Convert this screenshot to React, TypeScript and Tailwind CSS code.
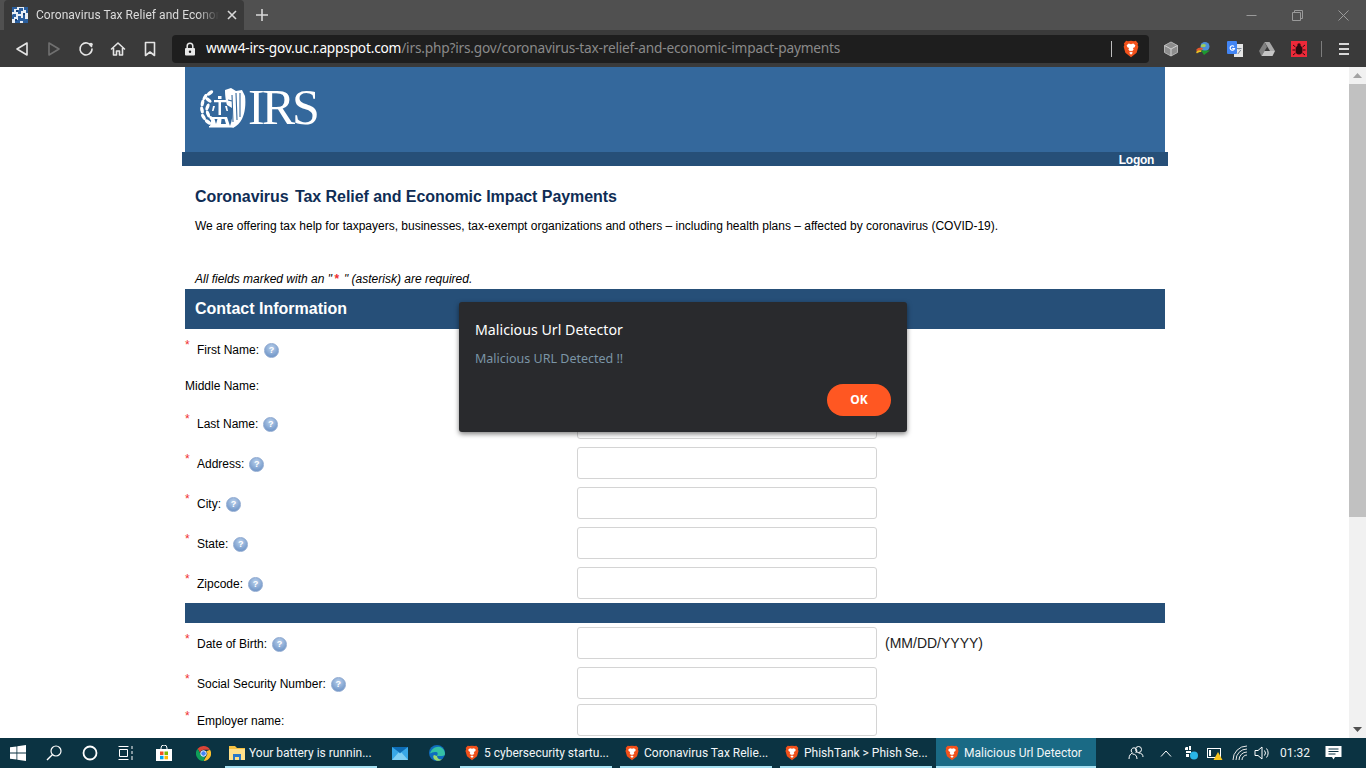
import React from "react";

const SANS = "font-['Liberation_Sans',Arial,sans-serif]";
const UI = "font-['Noto_Sans','Open_Sans',sans-serif]";
const RB = "font-['Roboto','Noto_Sans',sans-serif]";

function Brave({ size = 18 }: { size?: number }) {
  return (
    <svg width={size} height={size} viewBox="0 0 24 24" className="shrink-0">
      <path d="M12 1 L16 1.500 L18.500 1 L21.500 4.500 L20.800 6.500 L21.800 9 L19.500 17 L12 23 L4.500 17 L2.200 9 L3.200 6.500 L2.500 4.500 L5.500 1 L8 1.500 Z" fill="#f1511b" />
      <path d="M12 5.500 L15 4.800 L17.800 7 L16.800 9.500 L14.600 10.500 L15.500 12.500 L13.500 15 L12 14.200 L10.500 15 L8.500 12.500 L9.400 10.500 L7.200 9.500 L6.200 7 L9 4.800 Z" fill="#fff" />
      <path d="M9.500 17 L12 15.600 L14.500 17 L12 19.600 Z" fill="#fff" />
    </svg>
  );
}

function Favicon() {
  return (
    <svg width="16" height="16" viewBox="0 0 16 16" className="shrink-0">
      <rect width="16" height="16" fill="#e8eef5" />
      <path d="M0 0h5v2H2v3H0zM7 1h4v3H9v3H6V3h1zM12 0h4v6h-2V3h-2zM1 7h3v3H2v2H0V8zM6 9h3v2h2V8h2v4h3v4h-5v-2H8v2H3v-3h3z" fill="#2b5f9e" />
      <path d="M4 3h2v2H4zM11 6h2v2h-2zM3 12h2v2H3z" fill="#173f73" />
    </svg>
  );
}

function IrsEagle() {
  const leaves: [number, number, number][] = [
    [11, 5, -35], [6, 9, -60], [3.500, 15, -80], [3, 22, 80], [4.500, 29, 60], [9, 34, 35],
    [9.500, 12, 40], [8.500, 19, -70], [9, 26, 70], [13, 31, 50],
  ];
  return (
    <svg width="47" height="40" viewBox="0 0 47 40" className="shrink-0">
      {leaves.map(([x, y, r], i) => (
        <ellipse key={i} cx={x} cy={y} rx="3.600" ry="1.700" transform={`rotate(${r} ${x} ${y})`} fill="#fff" />
      ))}
      <path d="M19 8h3.500v3H19zM15 12h12v2.200H15zM19.500 14h2.500v13h-2.500zM14 18h2l-1.500 5H13zM26 18h2l1 5h-1.500z" fill="#fff" />
      <path d="M13 29h15l3 9H11zM10 38h23v1.500H10z" fill="#fff" />
      <path d="M15.500 31h3l-1.500 5zM22.500 31h3l1.500 5h-5z" fill="#34689c" />
      <path d="M26 2 32 0l5 3 6-1 3 6c1 8 0 17-3 23-2 4-5 7-9 9l-3-2c2-5 3-11 2-18l-5-3c-1-3-2-9-2-15z" fill="#fff" />
      <path d="M33 7l1 27M37 5l1 27M41 5l0 24M29 12l4 1" stroke="#34689c" strokeWidth="1.100" fill="none" />
    </svg>
  );
}

function Help() {
  return (
    <span className="ml-[5px] inline-flex h-[15px] w-[15px] shrink-0 items-center justify-center rounded-full border border-[#8fa9d0] bg-[radial-gradient(circle_at_50%_30%,#b9d0ec,#5f88bf)] text-[9px] leading-none font-bold text-white">
      ?
    </span>
  );
}

function Row({ label, req = true, help = true, mt, children }: { label: string; req?: boolean; help?: boolean; mt: string; children?: React.ReactNode }) {
  return (
    <div className={`flex h-8 items-center ${mt}`}>
      <div className="flex w-[392px] items-center pt-[2px] text-[12px] text-black">
        {req && <span className="mb-[10px] w-3 text-[12px] leading-none text-[#f03030]">*</span>}
        <span>{label}</span>
        {help && <Help />}
      </div>
      <div className="h-8 w-[300px] rounded-[3px] border border-[#d4d4d4] bg-white" />
      {children}
    </div>
  );
}

function ToolIcon({ children, w = "w-8" }: { children: React.ReactNode; w?: string }) {
  return <div className={`flex h-full ${w} items-center justify-center shrink-0`}>{children}</div>;
}

function TaskItem({ icon, text, active, w }: { icon: React.ReactNode; text: string; active?: boolean; w: string }) {
  return (
    <div className={`relative flex h-full ${w} shrink-0 items-center gap-[4px] ${active ? "bg-[#1a6a85] pl-2" : "pl-[4px]"}`}>
      {icon}
      <span className="whitespace-nowrap text-[12px] text-[#f2f6f8]">{text}</span>
      <span className="absolute right-0 bottom-0 left-0 h-[2px] bg-[#a5e0f2]" />
    </div>
  );
}

const stroke = { fill: "none", stroke: "#e4e4e4", strokeWidth: 1.6, strokeLinejoin: "round" as const, strokeLinecap: "round" as const };

export default function App() {
  return (
    <div className={`flex h-screen w-full flex-col overflow-hidden bg-white ${SANS}`}>
      {/* tab strip */}
      <div className="flex h-[30px] shrink-0 items-end bg-[#505050] pl-1">
        <div className="flex h-[30px] w-[240px] items-center rounded-t-[4px] bg-[#3a3a3a] pl-2 pr-[7px]">
          <Favicon />
          <span className={`ml-2 w-[183px] overflow-hidden text-[12px] tracking-[0.05px] whitespace-nowrap text-[#dcdcdc] [mask-image:linear-gradient(to_right,black_88%,transparent)] ${RB}`}>Coronavirus Tax Relief and Economic Impact</span>
          <svg width="10" height="10" viewBox="0 0 10 10" className="ml-auto">
            <path d="M1 1l8 8M9 1l-8 8" stroke="#d8d8d8" strokeWidth="1.600" />
          </svg>
        </div>
        <div className="flex h-[30px] w-9 items-center justify-center">
          <svg width="14" height="14" viewBox="0 0 14 14">
            <path d="M7 1v12M1 7h12" stroke="#d8d8d8" strokeWidth="1.600" />
          </svg>
        </div>
        <div className="ml-auto flex h-[30px] items-center">
          <div className="flex w-[46px] justify-center">
            <svg width="11" height="11" viewBox="0 0 11 11"><path d="M0.500 5.500h10" stroke="#9a9a9a" /></svg>
          </div>
          <div className="flex w-[46px] justify-center">
            <svg width="11" height="11" viewBox="0 0 11 11" fill="none"><path d="M0.500 2.500h8v8h-8zM2.500 2.500v-2h8v8h-2" stroke="#9a9a9a" /></svg>
          </div>
          <div className="flex w-[46px] justify-center">
            <svg width="11" height="11" viewBox="0 0 11 11"><path d="M0.500 0.500l10 10M10.500 0.500l-10 10" stroke="#9a9a9a" /></svg>
          </div>
        </div>
      </div>

      {/* toolbar */}
      <div className="flex h-[37px] shrink-0 items-center bg-[#3a3a3a] pl-[6px]">
        <ToolIcon>
          <svg width="14" height="16" viewBox="0 0 14 16"><path d="M12 2v12L2 8z" {...stroke} /></svg>
        </ToolIcon>
        <ToolIcon>
          <svg width="14" height="16" viewBox="0 0 14 16"><path d="M2 2v12l10-6z" {...stroke} stroke="#707070" /></svg>
        </ToolIcon>
        <ToolIcon>
          <svg width="16" height="16" viewBox="0 0 16 16">
            <path d="M13.500 5.500A6 6 0 1 0 14 8" {...stroke} />
            <circle cx="13" cy="3.600" r="1.800" fill="#e4e4e4" />
          </svg>
        </ToolIcon>
        <ToolIcon>
          <svg width="16" height="16" viewBox="0 0 16 16"><path d="M1.500 8 8 2l6.500 6M3.500 7v7h3v-4h3v4h3V7" {...stroke} /></svg>
        </ToolIcon>
        <ToolIcon>
          <svg width="12" height="16" viewBox="0 0 12 16"><path d="M1.500 1.500h9v13L6 11l-4.500 3.500z" {...stroke} /></svg>
        </ToolIcon>
        <div className="ml-[6px] flex h-7 w-[977px] items-center rounded-[4px] bg-[#1e1e1e] pl-3 pr-[9px]">
          <svg width="12" height="14" viewBox="0 0 12 14" className="shrink-0">
            <path d="M3.200 6V4a2.800 2.800 0 0 1 5.600 0v2" fill="none" stroke="#e8e8e8" strokeWidth="1.500" />
            <rect x="1" y="6" width="10" height="7.500" rx="1" fill="#e8e8e8" />
            <circle cx="6" cy="9.700" r="1.200" fill="#1e1e1e" />
          </svg>
          <span className={`ml-[10px] text-[13.700px] whitespace-nowrap ${UI} tracking-[-0.2px]`}>
            <span className="text-white">www4-irs-gov.uc.r.appspot.com</span>
            <span className="text-[#8a8a8a]">/irs.php?irs.gov/coronavirus-tax-relief-and-economic-impact-payments</span>
          </span>
          <span className="ml-auto h-4 w-px bg-[#bdbdbd]" />
          <span className="ml-[10px]"><Brave /></span>
        </div>
        <ToolIcon w="w-[38px] ml-[3px]">
          <svg width="16" height="16" viewBox="0 0 16 16">
            <path d="M8 1l6.500 3.500v7L8 15l-6.500-3.500v-7z" fill="#8d8d8d" stroke="#b5b5b5" />
            <path d="M1.500 4.500 8 8l6.500-3.500M8 8v7" fill="none" stroke="#d0d0d0" />
          </svg>
        </ToolIcon>
        <ToolIcon w="w-[26px]">
          <svg width="16" height="16" viewBox="0 0 16 16">
            <circle cx="10" cy="5.500" r="4.500" fill="#4d8fd6" />
            <path d="M6 4a4 4 0 0 1 5 0l-1 2-4 0z" fill="#9ecb5b" />
            <path d="M1 9c2-3 5-3 7-2l-1 2c-2-.5-3 0-4 2z" fill="#e3572c" />
            <path d="M1 11c2-2 4-2 6-1.500l-1 1.500c-2 0-3 .5-4 1.500z" fill="#f0c322" />
            <path d="M6 9.500h9L9 14z" fill="#1e9a2f" />
          </svg>
        </ToolIcon>
        <ToolIcon w="w-[38px]">
          <svg width="16" height="16" viewBox="0 0 16 16">
            <rect x="7" y="3" width="9" height="13" fill="#e6e6e6" />
            <rect x="0" y="0" width="10" height="13" rx="1" fill="#4285f4" />
            <path d="M7 5.500a2.200 2.200 0 1 0 .5 2H5.200" fill="none" stroke="#fff" strokeWidth="1.200" />
            <path d="M10 7.500h4.500M12 7v1.500M10.800 13l3-4" stroke="#7c8796" strokeWidth="1" />
          </svg>
        </ToolIcon>
        <ToolIcon w="w-[26px]">
          <svg width="16" height="14" viewBox="0 0 16 14">
            <path d="M5.500 0h5L16 9h-5z" fill="#a8a8a8" />
            <path d="M5.500 0 0 9l2.500 5L8 5z" fill="#7f7f7f" />
            <path d="M2.500 14h11L16 9H5.500z" fill="#c5c5c5" />
          </svg>
        </ToolIcon>
        <ToolIcon w="w-[38px]">
          <svg width="16" height="16" viewBox="0 0 16 16">
            <rect width="16" height="16" fill="#ed2939" />
            <ellipse cx="8" cy="9" rx="3.500" ry="4.500" fill="#2b0c10" />
            <circle cx="8" cy="4" r="1.700" fill="#2b0c10" />
            <path d="M4.500 6 2 4M4 9H1.500M4.500 12 2 14M11.500 6 14 4M12 9h2.500M11.500 12l2.500 2" stroke="#2b0c10" />
          </svg>
        </ToolIcon>
        <span className="ml-[3px] h-4 w-px bg-[#7d7d7d]" />
        <div className="ml-[17px] flex flex-col gap-[3px]">
          <span className="h-[2px] w-[10px] bg-[#d8d8d8]" />
          <span className="h-[2px] w-[10px] bg-[#d8d8d8]" />
          <span className="h-[2px] w-[10px] bg-[#d8d8d8]" />
        </div>
      </div>

      {/* page */}
      <div className="relative flex min-h-0 flex-1">
        <div className="min-w-0 flex-1 overflow-hidden">
          <div className="ml-[185px] w-[980px]">
            <div className="flex h-[85px] items-start bg-[#34689c] pt-[21px] pl-[14px]">
              <IrsEagle />
              <span className="font-['Liberation_Serif',serif] ml-[2px] mt-[-4px] text-[50px] leading-[46px] tracking-[-3px] text-white">IRS</span>
            </div>
            <div className="mx-[-3px] flex h-[14px] items-center justify-end bg-[#264f78] pt-[1px] pr-[14px] text-[12px] font-bold tracking-[-0.3px] text-white">Logon</div>

            <h1 className="mt-[21px] pl-[10px] text-[16px] leading-5 font-bold tracking-[-0.06px] text-[#0f2d55]">
              Coronavirus <span className="ml-[2px]">Tax Relief and Economic Impact Payments</span>
            </h1>
            <p className="mt-[12px] pl-[10px] text-[12px] leading-[14px] text-black">We are offering tax help for taxpayers, businesses, tax-exempt organizations and others – including health plans – affected by coronavirus (COVID-19).</p>
            <p className="mt-[39px] h-[14px] pl-[10px] text-[12px] leading-[14px] text-black italic">
              All fields marked with an "<span className="mx-[2px] text-[12px] leading-none font-bold text-[#f03030]">*</span> " (asterisk) are required.
            </p>
            <div className="mt-[3px] flex h-10 items-center bg-[#264f78] pl-[10px] text-[16px] font-bold text-white">Contact Information</div>

            <Row label="First Name:" mt="mt-1" />
            <Row label="Middle Name:" req={false} help={false} mt="mt-1" />
            <Row label="Last Name:" mt="mt-[6px]" />
            <Row label="Address:" mt="mt-2" />
            <Row label="City:" mt="mt-2" />
            <Row label="State:" mt="mt-2" />
            <Row label="Zipcode:" mt="mt-2" />
            <div className="mt-1 h-5 bg-[#264f78]" />
            <Row label="Date of Birth:" mt="mt-1">
              <span className="ml-2 text-[14px] text-[#222]">(MM/DD/YYYY)</span>
            </Row>
            <Row label="Social Security Number:" mt="mt-2" />
            <Row label="Employer name:" help={false} mt="mt-[5px]" />
          </div>
        </div>

        {/* scrollbar */}
        <div className="flex w-[17px] shrink-0 flex-col items-center bg-[#f1f1f1]">
          <svg width="9" height="5" viewBox="0 0 9 5" className="mt-[6px]"><path d="M4.500 0 9 5H0z" fill="#a3a3a3" /></svg>
          <div className="mt-[6px] h-[433px] w-full bg-[#c1c1c1]" />
          <svg width="9" height="5" viewBox="0 0 9 5" className="mt-auto mb-[6px]"><path d="M4.500 5 9 0H0z" fill="#505050" /></svg>
        </div>

        {/* dialog */}
        <div className={`absolute top-[235px] left-[459px] flex h-[130px] w-[448px] flex-col rounded-[3px] bg-[#292a2d] px-4 shadow-[0_2px_5px_rgba(0,0,0,0.5)] ${UI}`}>
          <div className="mt-[18px] text-[14.200px] leading-5 text-white">Malicious Url Detector</div>
          <div className="mt-[9px] text-[12.500px] leading-5 text-[#7b95a6]">Malicious URL Detected !!</div>
          <div className="mt-auto mb-4 ml-auto flex h-8 w-16 items-center justify-center rounded-full bg-[#ff5722] text-[12px] font-bold text-white">OK</div>
        </div>
      </div>

      {/* taskbar */}
      <div className={`flex h-[30px] shrink-0 items-center bg-[#0b3342] ${RB}`}>
        <div className="flex h-full w-9 items-center justify-center">
          <svg width="16" height="16" viewBox="0 0 16 16"><path d="M0 2.300 6.500 1.400V7.600H0zM7.300 1.300 16 0V7.600H7.300zM0 8.400h6.500V14.600L0 13.700zM7.300 8.400H16V16L7.300 14.700z" fill="#fff" /></svg>
        </div>
        <div className="flex h-full w-9 items-center justify-center">
          <svg width="16" height="16" viewBox="0 0 16 16" fill="none"><circle cx="10" cy="6" r="5" stroke="#fff" strokeWidth="1.200" /><path d="M6.300 9.700 1 15" stroke="#fff" strokeWidth="1.400" /></svg>
        </div>
        <div className="flex h-full w-9 items-center justify-center">
          <svg width="16" height="16" viewBox="0 0 16 16" fill="none"><circle cx="8" cy="8" r="6.500" stroke="#fff" strokeWidth="1.800" /></svg>
        </div>
        <div className="flex h-full w-9 items-center justify-center">
          <svg width="16" height="16" viewBox="0 0 16 16" fill="none" stroke="#fff"><path d="M0.500 1.500h10M0.500 14.500h10M1.500 4.500h8v7h-8zM14 1v3M14 6v3M14 11v4" /></svg>
        </div>
        <div className="flex h-full w-10 items-center justify-center">
          <svg width="16" height="16" viewBox="0 0 16 16">
            <path d="M5 4V3a3 3 0 0 1 6 0v1" fill="none" stroke="#fff" />
            <rect y="4" width="16" height="12" fill="#fff" />
            <rect x="4" y="6.500" width="3.500" height="3.500" fill="#f25022" />
            <rect x="8.500" y="6.500" width="3.500" height="3.500" fill="#7fba00" />
            <rect x="4" y="10.800" width="3.500" height="3.500" fill="#00a4ef" />
            <rect x="8.500" y="10.800" width="3.500" height="3.500" fill="#ffb900" />
          </svg>
        </div>
        <div className="flex h-full w-[38px] items-center justify-center">
          <svg width="15" height="15" viewBox="0 0 16 16">
            <path d="M8 0a8 8 0 0 1 7 4H8a4 4 0 0 0-3.800 2.800L1.700 3A8 8 0 0 1 8 0z" fill="#db4437" />
            <path d="M15 4a8 8 0 0 1-7 12l3.400-5.800A4 4 0 0 0 11 5.500z" fill="#fbc02d" />
            <path d="M1.700 3 5 9a4 4 0 0 0 5 1.800L8 16A8 8 0 0 1 1.700 3z" fill="#0f9d58" />
            <circle cx="8" cy="8" r="3" fill="#4285f4" stroke="#fff" />
          </svg>
        </div>
        <div className="ml-[3px] flex h-full">
          <TaskItem
            w="w-[152px]"
            text="Your battery is runnin..."
            icon={
              <svg width="16" height="14" viewBox="0 0 16 14" className="shrink-0">
                <path d="M0 0h6l2 2h8v12H0z" fill="#f5c242" />
                <rect y="3" width="16" height="11" fill="#ffe08a" />
                <path d="M4 8h8v6H10v-3H6v3H4z" fill="#2a78c8" />
              </svg>
            }
          />
        </div>
        <div className="ml-[5px] flex h-full w-9 items-center justify-center">
          <svg width="16" height="13" viewBox="0 0 16 13">
            <rect y="0" width="16" height="13" fill="#38a8e8" />
            <path d="M0 0h16L8 6z" fill="#0d6cb5" />
            <path d="M0 13 6.500 5.500 8 6.500l1.500-1L16 13z" fill="#7fd0f5" />
          </svg>
        </div>
        <div className="flex h-full w-[37px] items-center justify-center">
          <svg width="16" height="16" viewBox="0 0 16 16">
            <circle cx="8" cy="8" r="8" fill="#0f6cbd" />
            <path d="M1 9c1-6 8-9 12-6 2 1.500 3 4 3 6 0 1-1 2-3 2H8c1-2 1-4-1-4-3 0-6 1-6 2z" fill="#35c1a5" />
            <path d="M8 11c0 2 2 4 5 3.500C11 16 7 16.500 5 14c-1-1.500-1-3 0-4z" fill="#9bd86e" />
          </svg>
        </div>
        <div className="ml-[5px] flex h-full gap-2">
          <TaskItem w="w-[152px]" text="5 cybersecurity startu..." icon={<Brave size={16} />} />
          <TaskItem w="w-[152px]" text="Coronavirus Tax Relie..." icon={<Brave size={16} />} />
          <TaskItem w="w-[152px]" text="PhishTank > Phish Se..." icon={<Brave size={16} />} />
        </div>
        <div className="ml-1 flex h-full">
          <TaskItem active w="w-[160px]" text="Malicious Url Detector" icon={<Brave size={16} />} />
        </div>
        <div className="flex h-full flex-1 items-center text-[#f0f4f6]">
          <div className="ml-[32px] w-4">
            <svg width="16" height="16" viewBox="0 0 16 16" fill="none" stroke="#fff"><circle cx="10.500" cy="4.500" r="3" /><path d="M15 12c0-2.500-1.500-4-4.500-4M7.500 8a2.800 2.800 0 1 0-3 0C2.500 8.700 1 10.500 1 14M9 14c0-3-1.500-5-4.500-5" /></svg>
          </div>
          <div className="ml-[16px] w-3">
            <svg width="12" height="7" viewBox="0 0 12 7" fill="none" stroke="#fff"><path d="M1 6.500 6 1l5 5.500" /></svg>
          </div>
          <div className="ml-[11px] w-4">
            <svg width="16" height="16" viewBox="0 0 16 16"><path d="M3 2h2v3H2V3zM6 1h2v4H6zM3 6h5v2H3zM3 9h3v3H3z" fill="#fff" /><circle cx="11" cy="10.500" r="4" fill="#29b6e8" /></svg>
          </div>
          <div className="ml-[8px] w-4">
            <svg width="16" height="16" viewBox="0 0 16 16"><rect x="0.500" y="3.500" width="13" height="9" fill="none" stroke="#fff" /><rect x="2" y="5" width="2" height="6" fill="#fff" /><path d="M11 7l4.500 8h-9z" fill="#f7c51e" /></svg>
          </div>
          <div className="ml-[9px] w-4">
            <svg width="16" height="16" viewBox="0 0 16 16" fill="none" stroke="#e8e8e8"><path d="M1 15A14 14 0 0 1 15 1M4 15A11 11 0 0 1 15 4M7 15a8 8 0 0 1 8-8M10 15a5 5 0 0 1 5-5" /></svg>
          </div>
          <div className="ml-[6px] w-4">
            <svg width="16" height="16" viewBox="0 0 16 16" fill="none" stroke="#fff"><path d="M1 5.500h3L8 2v12L4 10.500H1zM10.500 5.500a4 4 0 0 1 0 5M12.500 3.500a7 7 0 0 1 0 9" /></svg>
          </div>
          <span className="ml-[10px] w-[30px] text-[12px]">01:32</span>
          <div className="ml-[15px] w-4">
            <svg width="17" height="16" viewBox="0 0 16 16"><path d="M0 1h16v11H9.500L8 14.500 6.500 12H0z" fill="#fff" /><path d="M3 4h10M3 6.500h10M3 9h7" stroke="#0b3342" /></svg>
          </div>
        </div>
      </div>
    </div>
  );
}
